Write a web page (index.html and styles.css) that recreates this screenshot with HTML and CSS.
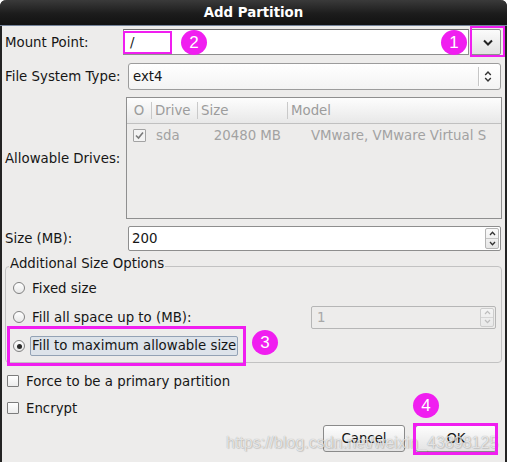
FILE: index.html
```html
<!DOCTYPE html>
<html>
<head>
<meta charset="utf-8">
<title>Add Partition</title>
<link rel="stylesheet" href="styles.css">
</head>
<body>
<div class="window">
  <div class="titlebar">Add Partition</div>
  <div class="content">
    <div class="row mount-row">
      <span class="lbl">Mount Point:</span>
      <div class="mount-field">
        <div class="entry">/</div>
        <div class="drop-btn">
          <svg width="10" height="7" viewBox="0 0 10 7"><path d="M1 1.5 L5 5.5 L9 1.5" fill="none" stroke="#222" stroke-width="2"/></svg>
        </div>
      </div>
    </div>
    <div class="row fs-row">
      <span class="lbl">File System Type:</span>
      <div class="combo">
        <span class="combo-text">ext4</span>
        <span class="combo-sep"></span>
        <svg class="updown" width="8" height="13" viewBox="0 0 8 13"><path d="M1.2 5 L4 2 L6.8 5 M1.2 8 L4 11 L6.8 8" fill="none" stroke="#333" stroke-width="1.4"/></svg>
      </div>
    </div>
    <div class="row drives-row">
      <span class="lbl">Allowable Drives:</span>
      <div class="tree">
        <div class="thead">
          <span class="c0">O</span>
          <span class="c1 hsep">Drive</span>
          <span class="c2 hsep">Size</span>
          <span class="c3 hsep">Model</span>
        </div>
        <div class="trow">
          <span class="c0 r0"><span class="tcheck"><svg width="11" height="11" viewBox="0 0 11 11"><path d="M2 5.5 L4.5 8 L9 2.5" fill="none" stroke="#7a7a7a" stroke-width="1.6"/></svg></span></span>
          <span class="c1 r1">sda</span>
          <span class="c2 r2">20480 MB</span>
          <span class="c3 r3">VMware, VMware Virtual S</span>
        </div>
      </div>
    </div>
    <div class="row size-row">
      <span class="lbl">Size (MB):</span>
      <div class="spin">
        <span class="spin-text">200</span>
        <span class="spin-btns">
          <span class="sb"><svg width="7" height="5" viewBox="0 0 7 5"><path d="M1 4 L3.5 1.3 L6 4" fill="none" stroke="#333" stroke-width="1.3"/></svg></span>
          <span class="sb sb-down"><svg width="7" height="5" viewBox="0 0 7 5"><path d="M1 1 L3.5 3.7 L6 1" fill="none" stroke="#333" stroke-width="1.3"/></svg></span>
        </span>
      </div>
    </div>
    <fieldset class="frame">
      <legend>Additional Size Options</legend>
      <div class="opt">
        <span class="radio"></span>
        <span class="opt-label">Fixed size</span>
      </div>
      <div class="opt">
        <span class="radio"></span>
        <span class="opt-label">Fill all space up to (MB):</span>
        <div class="spin spin-off">
          <span class="spin-text">1</span>
          <span class="spin-btns">
            <span class="sb"><svg width="7" height="5" viewBox="0 0 7 5"><path d="M1 4 L3.5 1.3 L6 4" fill="none" stroke="#bdbdbd" stroke-width="1.2"/></svg></span>
            <span class="sb sb-down"><svg width="7" height="5" viewBox="0 0 7 5"><path d="M1 1 L3.5 3.7 L6 1" fill="none" stroke="#bdbdbd" stroke-width="1.2"/></svg></span>
          </span>
        </div>
      </div>
      <div class="opt">
        <span class="radio on"><span class="dot"></span></span>
        <span class="opt-label focus">Fill to maximum allowable size</span>
      </div>
    </fieldset>
    <div class="check-row first">
      <span class="checkbox"></span>
      <span>Force to be a primary partition</span>
    </div>
    <div class="check-row">
      <span class="checkbox"></span>
      <span>Encrypt</span>
    </div>
    <div class="buttons">
      <button class="btn">Cancel</button>
      <button class="btn">OK</button>
    </div>
  </div>

  <div class="watermark">https://blog.csdn.net/weixin_43898125</div>

  <div class="mark mark-slash"></div>
  <div class="mark mark-drop"></div>
  <div class="mark thick mark-radio"></div>
  <div class="mark thick mark-ok"></div>
  <div class="badge b1">1</div>
  <div class="badge b2">2</div>
  <div class="badge b3">3</div>
  <div class="badge b4">4</div>
</div>
</body>
</html>
```

FILE: styles.css
```css
html, body {
  margin: 0;
  padding: 0;
  background: #ffffff;
}

body {
  font-family: "DejaVu Sans", sans-serif;
  font-size: 13.33px;
  color: #161616;
}

.window {
  position: relative;
  width: 507px;
  height: 462px;
  background: #edeceb;
  border-radius: 6px 6px 0 0;
  overflow: hidden;
  box-shadow: inset 2px 0 #232323, inset -2px 0 #232323;
}

.titlebar {
  height: 25px;
  line-height: 25px;
  border-bottom: 1px solid #74839a;
  background: linear-gradient(#3a3a3a, #1c1c1c 55%, #121212);
  color: #ffffff;
  font-weight: bold;
  text-align: center;
  border-radius: 6px 6px 0 0;
}

.content {
  padding: 0 6px 0 5px;
  display: flex;
  flex-direction: column;
}

.row {
  display: flex;
  align-items: center;
}

.lbl {
  width: 123px;
  flex: none;
  white-space: nowrap;
}

/* Mount point */
.mount-row {
  margin-top: 3px;
  height: 26px;
}

.mount-field {
  flex: 1;
  margin-left: -5px;
  height: 26px;
  display: flex;
}

.entry {
  flex: 1;
  box-sizing: border-box;
  height: 26px;
  background: #ffffff;
  border: 1px solid #8e8e8e;
  border-top-color: #6e6e6e;
  padding-left: 6px;
  display: flex;
  align-items: center;
}

.drop-btn {
  width: 31px;
  margin-left: 1px;
  box-sizing: border-box;
  height: 26px;
  border: 1px solid #8e8e8e;
  border-radius: 2px;
  background: linear-gradient(#fbfbfb, #e2e2e2);
  display: flex;
  align-items: center;
  justify-content: center;
  padding-left: 4px;
}

/* File system combo */
.fs-row {
  margin-top: 8px;
  height: 27px;
}

.combo {
  flex: 1;
  box-sizing: border-box;
  height: 27px;
  border: 1px solid #9c9c9c;
  border-radius: 3px;
  background: linear-gradient(#ffffff, #f3f3f3);
  display: flex;
  align-items: center;
  padding-left: 4px;
}

.combo-text {
  flex: 1;
}

.combo-sep {
  width: 1px;
  height: 19px;
  background: #c6c6c6;
  border-right: 1px solid #ffffff;
}

.updown {
  margin: 0 8px 0 4px;
}

/* Drives tree */
.drives-row {
  margin-top: 7px;
  height: 122px;
}

.tree {
  flex: 1;
  margin-left: -2px;
  margin-right: -1px;
  height: 122px;
  box-sizing: border-box;
  border: 1px solid #8f8f8f;
  background: #edeceb;
  overflow: hidden;
}

.thead {
  height: 25px;
  border-bottom: 1px solid #c0c0c0;
  background: linear-gradient(#fdfdfd, #e8e8e8);
  display: flex;
  align-items: center;
  color: #9c9c9c;
}

.thead > span {
  height: 17px;
  line-height: 17px;
  box-sizing: border-box;
  white-space: nowrap;
}

.c0 {
  width: 24px;
  flex: none;
  text-align: center;
  box-sizing: border-box;
}

.c1 {
  width: 46px;
  flex: none;
  box-sizing: border-box;
}

.c2 {
  width: 90px;
  flex: none;
  box-sizing: border-box;
}

.c3 {
  flex: 1;
  box-sizing: border-box;
}

.hsep {
  border-left: 1px solid #c9c9c9;
  padding-left: 3px;
}

.trow {
  height: 23px;
  display: flex;
  align-items: center;
  color: #a2a2a2;
  white-space: nowrap;
}

.r0 {
  text-align: left;
  padding-left: 6px;
  display: flex;
}

.tcheck {
  width: 13px;
  height: 13px;
  box-sizing: border-box;
  border: 1px solid #a3a3a3;
  border-radius: 1px;
  background: #f3f3f3;
  display: flex;
  align-items: center;
  justify-content: center;
}

.r1 {
  padding-left: 5px;
}

.r2 {
  text-align: right;
  padding-right: 6px;
}

.r3 {
  padding-left: 24px;
  overflow: hidden;
}

/* Size spin */
.size-row {
  margin-top: 7px;
  height: 25px;
}

.spin {
  flex: 1;
  box-sizing: border-box;
  height: 25px;
  border: 1px solid #8e8e8e;
  border-radius: 2px;
  background: #ffffff;
  display: flex;
  align-items: stretch;
}

.spin-text {
  flex: 1;
  padding-left: 3px;
  display: flex;
  align-items: center;
}

.spin-btns {
  width: 14px;
  margin: 1px 1px 1px 0;
  box-sizing: border-box;
  border: 1px solid #b4b4b4;
  border-radius: 2px;
  background: linear-gradient(#fafafa, #e6e6e6);
  display: flex;
  flex-direction: column;
}

.sb {
  flex: 1;
  display: flex;
  align-items: center;
  justify-content: center;
}

.sb-down {
  border-top: 1px solid #c4c4c4;
}

/* Frame */
.frame {
  margin: 5px -1px 0 0;
  padding: 0 5px 4px 7px;
  border: 1px solid #c2c2c2;
  border-radius: 4px;
  min-width: 0;
}

.frame legend {
  margin-left: -4px;
  padding: 0 1px 4px 1px;
  line-height: 16px;
}

.opt {
  height: 24px;
  display: flex;
  align-items: center;
}

.opt + .opt {
  margin-top: 5px;
}

.radio {
  width: 12px;
  height: 12px;
  flex: none;
  box-sizing: border-box;
  border: 1px solid #808080;
  border-radius: 50%;
  background: linear-gradient(#ffffff, #e8e8e8);
  display: flex;
  align-items: center;
  justify-content: center;
}

.dot {
  width: 5px;
  height: 5px;
  border-radius: 50%;
  background: #2a2a2a;
}

.opt-label {
  margin-left: 5px;
  padding: 0 1px;
  border: 1px solid transparent;
  white-space: nowrap;
}

.opt-label.focus {
  height: 20px;
  line-height: 18px;
  box-sizing: border-box;
  border-color: #93a2b5;
  border-radius: 2px;
  background: #dde3ea;
}

.spin-off {
  flex: none;
  width: 185px;
  height: 23px;
  margin-left: auto;
  border-color: #b6b6b6;
  background: #edeceb;
  color: #a8a8a8;
}

.spin-off .spin-text {
  padding-left: 5px;
}

.spin-off .spin-btns {
  border-color: #cdcdcd;
  background: linear-gradient(#f4f4f4, #e9e9e9);
}

.spin-off .sb-down {
  border-top-color: #d6d6d6;
}

/* Checks */
.check-row {
  height: 22px;
  display: flex;
  align-items: center;
  margin-top: 5px;
}

.check-row.first {
  margin-top: 7px;
}

.checkbox {
  width: 12px;
  height: 12px;
  box-sizing: border-box;
  margin: 0 7px 0 2px;
  border: 1px solid #7c7c7c;
  border-radius: 1px;
  background: linear-gradient(#ffffff, #ececec);
}

/* Buttons */
.buttons {
  margin-top: 6px;
  display: flex;
  justify-content: flex-end;
  gap: 10px;
  padding-right: 4px;
}

.btn {
  width: 82px;
  height: 27px;
  box-sizing: border-box;
  border: 1px solid #8a8a8a;
  border-radius: 3px;
  background: linear-gradient(#fdfdfd, #e3e3e3);
  font: inherit;
  color: #161616;
  padding: 0;
}

/* Overlay: watermark and annotations */
.watermark {
  position: absolute;
  left: 226px;
  top: 434px;
  font-family: "Liberation Sans", Arial, sans-serif;
  font-size: 16px;
  line-height: 18px;
  white-space: nowrap;
  color: rgba(255, 255, 255, 0.72);
  text-shadow: 0 0 1px rgba(0, 0, 0, 0.35), 1px 1px 1px rgba(0, 0, 0, 0.12);
}

.mark {
  position: absolute;
  box-sizing: border-box;
  border: 2px solid #f01ef0;
}

.mark.thick {
  border-width: 3px;
}

.mark-slash {
  left: 123px;
  top: 31px;
  width: 49px;
  height: 23px;
}

.mark-drop {
  left: 470px;
  top: 26px;
  width: 35px;
  height: 31px;
}

.mark-radio {
  left: 7px;
  top: 326px;
  width: 239px;
  height: 40px;
}

.mark-ok {
  left: 413px;
  top: 423px;
  width: 85px;
  height: 32px;
}

.badge {
  position: absolute;
  width: 26px;
  height: 25px;
  border-radius: 50%;
  background: #f01ef0;
  color: #ffffff;
  font-family: "Liberation Sans", Arial, sans-serif;
  font-size: 17px;
  display: flex;
  align-items: center;
  justify-content: center;
}

.b1 { left: 441px; top: 30px; }
.b2 { left: 181px; top: 30px; }
.b3 { left: 252px; top: 330px; }
.b4 { left: 413px; top: 393px; }
```
